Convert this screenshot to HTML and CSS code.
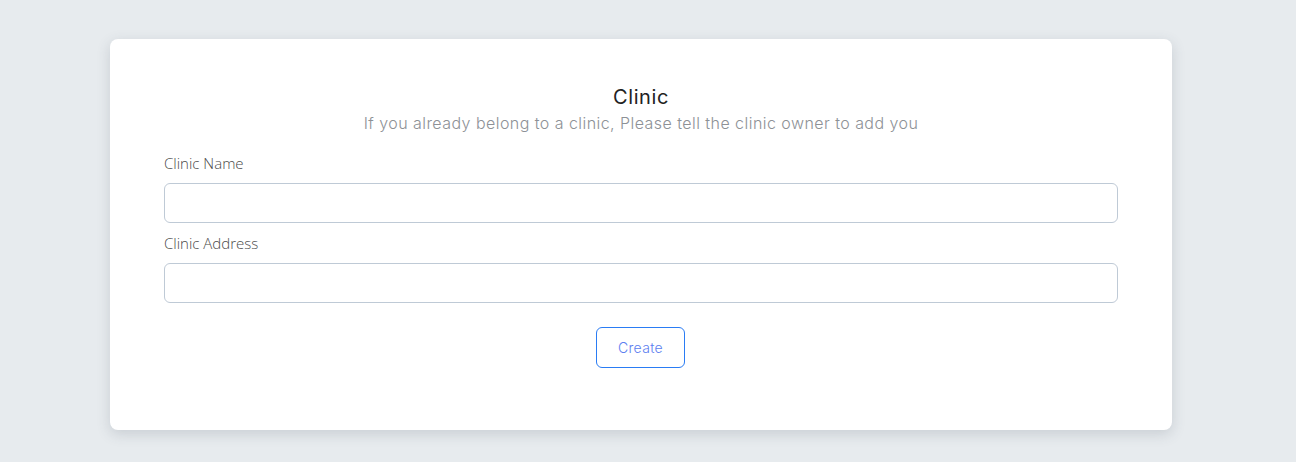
FILE: index.html
```html
<!DOCTYPE html>
<html lang="en">
<head>
<meta charset="utf-8">
<title>Clinic</title>
<link rel="stylesheet" href="styles.css">
</head>
<body>
<main class="page">
  <section class="card">
    <header class="head">
      <h1 class="title">Clinic</h1>
      <p class="subtitle">If you already belong to a clinic, Please tell the clinic owner to add you</p>
    </header>
    <form class="form">
      <label class="field">
        <span class="label">Clinic Name</span>
        <input class="input" type="text">
      </label>
      <label class="field">
        <span class="label">Clinic Address</span>
        <input class="input" type="text">
      </label>
      <div class="actions">
        <button class="btn" type="button">Create</button>
      </div>
    </form>
  </section>
</main>
</body>
</html>
```
FILE: styles.css
```css
* { box-sizing: border-box; }
html, body { margin: 0; padding: 0; }
body {
  background: #e7ebee;
  font-family: "Open Sans", "Liberation Sans", sans-serif;
  width: 1296px;
  height: 462px;
  overflow: hidden;
}
.page {
  padding: 39px 124px 0 110px;
}
.card {
  width: 1062px;
  height: 391px;
  background: #fff;
  border-radius: 8px;
  box-shadow: 0 4px 14px rgba(60, 70, 90, 0.18);
  padding: 46px 54px 0 54px;
}
.head { text-align: center; }
.title {
  margin: 0;
  font-family: "Inter", "Open Sans", sans-serif;
  font-weight: 400;
  font-size: 20px;
  line-height: 24px;
  letter-spacing: 0.6px;
  color: #222;
}
.subtitle {
  margin: 2px 0 0;
  font-family: "Inter", "Open Sans", sans-serif;
  font-weight: 300;
  font-size: 16px;
  line-height: 24px;
  letter-spacing: 0.45px;
  color: #8d9196;
}
.form {
  margin-top: 18px;
  display: flex;
  flex-direction: column;
}
.field {
  display: flex;
  flex-direction: column;
  gap: 10px;
  margin-bottom: 10px;
}
.label {
  font-weight: 300;
  font-size: 15px;
  line-height: 20px;
  color: #4a4a4a;
}
.input {
  width: 954px;
  height: 40px;
  border: 1px solid #bfcad6;
  border-radius: 6px;
  background: #fff;
  font: inherit;
  padding: 0 12px;
  outline: none;
}
.actions {
  display: flex;
  justify-content: center;
  margin-top: 14px;
  padding-right: 1px;
}
.btn {
  width: 89px;
  height: 41px;
  border: 1px solid #2a7cf4;
  border-radius: 6px;
  background: #fff;
  color: #5c7ef0;
  font-family: "Inter", "Open Sans", sans-serif;
  font-weight: 300;
  font-size: 14px;
  letter-spacing: 0.3px;
  cursor: pointer;
}
```
